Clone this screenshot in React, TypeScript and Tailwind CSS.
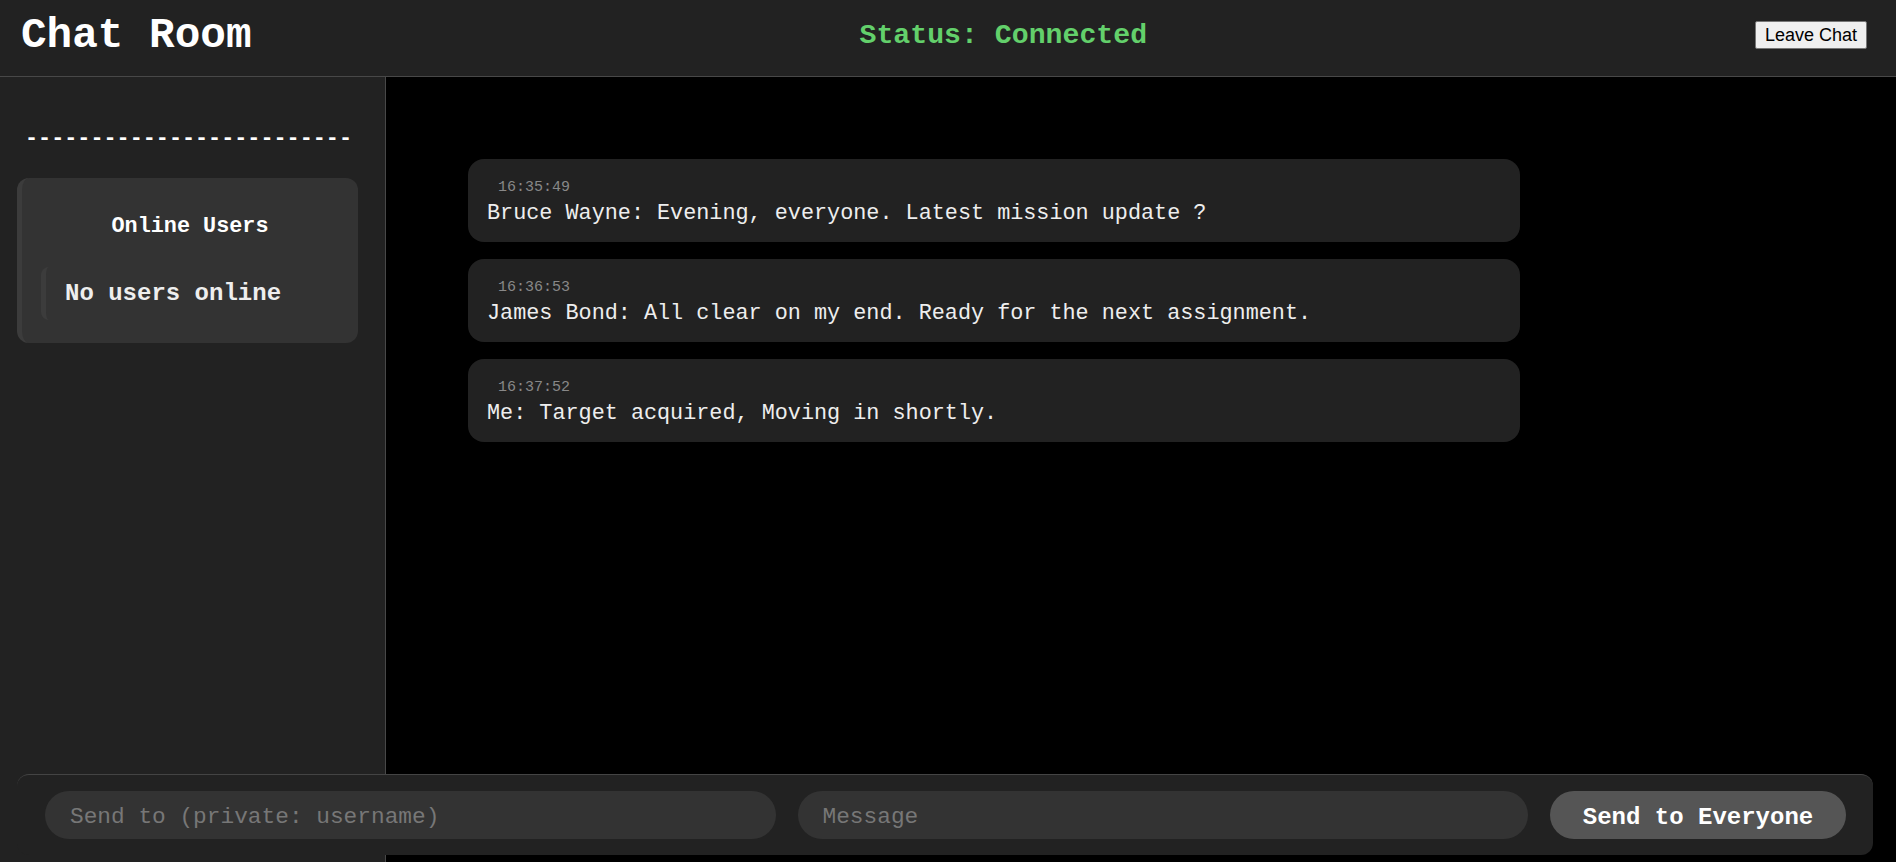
import React from 'react';

const mono = "font-['Liberation_Mono','Courier_New',monospace]";

const messages = [
  { time: '16:35:49', text: 'Bruce Wayne: Evening, everyone. Latest mission update ?' },
  { time: '16:36:53', text: 'James Bond: All clear on my end. Ready for the next assignment.' },
  { time: '16:37:52', text: 'Me: Target acquired, Moving in shortly.' },
];

const App: React.FC = () => {
  return (
    <div className={`flex h-screen flex-col overflow-hidden bg-black text-white ${mono}`}>
      <header className="flex h-[77px] shrink-0 items-center justify-between border-b border-[#484848] bg-[#222] pb-[3px] pl-[21px] pr-[29px]">
        <h1 className="text-[42.7px] font-bold leading-none text-white">Chat Room</h1>
        <div className="text-[28.2px] font-bold leading-none text-[#63d06b]">Status: Connected</div>
        <button className="mb-[4px] h-[28px] w-[112px] rounded-[2px] border border-[#767676] bg-[#efefef] font-['Liberation_Sans',Arial,sans-serif] text-[18px] leading-none text-black">
          Leave Chat
        </button>
      </header>

      <div className="flex min-h-0 flex-1">
        <aside className="w-[386px] shrink-0 border-r border-[#484848] bg-[#222] pl-[17px] pr-[27px] pt-[49px]">
          <div className="pl-[8px] text-[21.8px] font-bold leading-[26px] text-white">-------------------------</div>
          <div className="mt-[26px] rounded-xl border-l-[5px] border-[#3c3c3c] bg-[#333] pb-[23px] pl-[19px] pr-[19px] pt-[36px]">
            <h2 className="text-center text-[21.8px] font-bold leading-[26px] text-white">Online Users</h2>
            <div className="mt-[27px] flex h-[53px] items-center rounded-lg border-l-[5px] border-[#3c3c3c] pl-[19px]">
              <span className="text-[24px] font-bold text-[#eee]">No users online</span>
            </div>
          </div>
        </aside>

        <main className="flex-1 bg-black pl-[82px] pt-[82px]">
          <div className="flex w-[1052px] flex-col gap-[17px]">
            {messages.map((m) => (
              <div key={m.time} className="rounded-2xl bg-[#222] pb-[15px] pl-[19px] pr-[19px] pt-[20px]">
                <div className="mb-[4px] pl-[11px] text-[15px] leading-[18px] text-[#888]">{m.time}</div>
                <div className="text-[21.8px] leading-[26px] text-[#eee]">{m.text}</div>
              </div>
            ))}
          </div>
        </main>
      </div>

      <div className="fixed bottom-[7px] left-[17px] right-[23px] flex h-[81px] items-center gap-[22px] rounded-xl border-t border-[#444] bg-[#222] pl-[28px] pr-[27px]">
        <input
          className={`h-[48px] flex-1 rounded-full bg-[#333] pl-[25px] pt-[3px] text-[22.8px] text-[#ddd] outline-none placeholder:text-[#777] ${mono}`}
          placeholder="Send to (private: username)"
        />
        <input
          autoFocus
          className={`h-[48px] flex-1 rounded-full bg-[#333] pl-[25px] pt-[3px] text-[22.8px] text-[#ddd] caret-white outline-none placeholder:text-[#777] ${mono}`}
          placeholder="Message"
        />
        <button className={`h-[48px] w-[296px] shrink-0 rounded-full bg-[#555] pt-[6px] text-[24px] font-bold text-white ${mono}`}>
          Send to Everyone
        </button>
      </div>
    </div>
  );
};

export default App;
